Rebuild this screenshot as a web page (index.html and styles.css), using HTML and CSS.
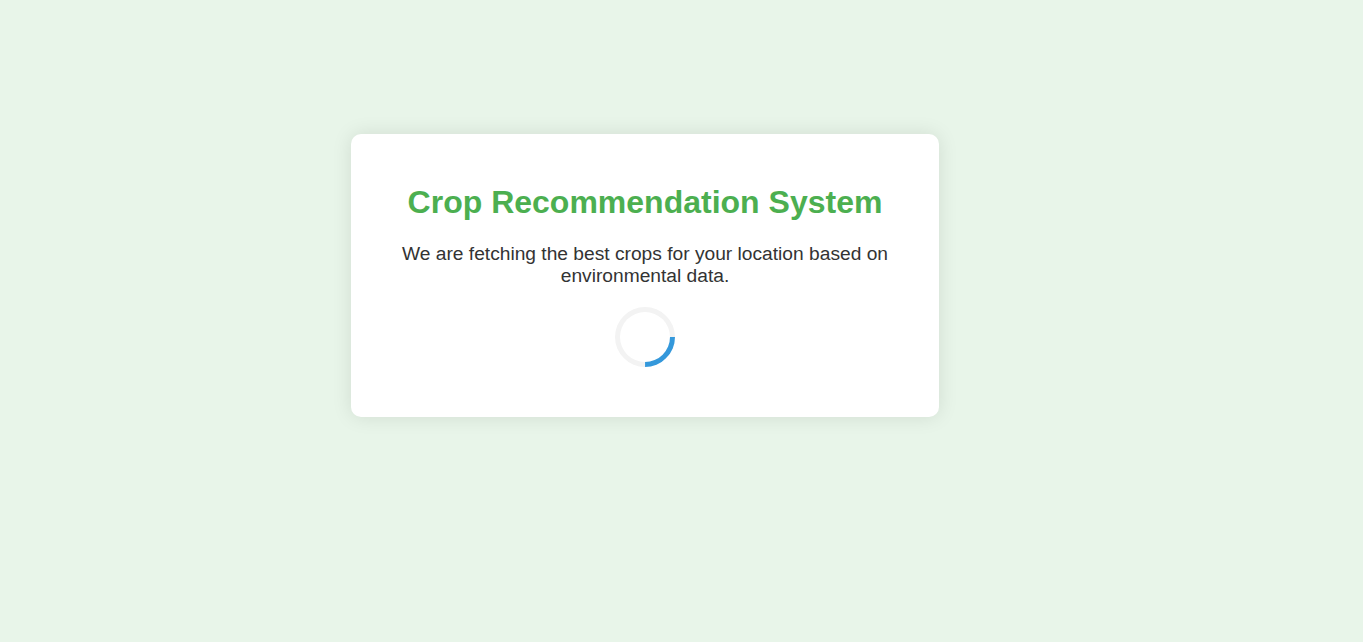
FILE: index.html
```html
<!DOCTYPE html>
<html lang="en">
<head>
<meta charset="UTF-8">
<title>Crop Recommendation System</title>
<link rel="stylesheet" href="styles.css">
</head>
<body>
<main class="page">
  <section class="card">
    <h1 class="title">Crop Recommendation System</h1>
    <p class="message">We are fetching the best crops for your location based on environmental data.</p>
    <div class="spinner"></div>
  </section>
</main>
</body>
</html>
```

FILE: styles.css
```css
html, body {
  margin: 0;
  padding: 0;
  height: 100%;
}
body {
  background: #e8f5e9;
  font-family: "Liberation Sans", Arial, sans-serif;
  color: #333;
}
.page {
  display: flex;
  align-items: flex-start;
  padding: 134px 0 0 351px;
}
.card {
  width: 528px;
  padding: 30px;
  background: #fff;
  border-radius: 10px;
  box-shadow: 0 0 20px rgba(0, 0, 0, 0.1);
  text-align: center;
}
.title {
  margin: 20.4px 0 21.44px;
  font-size: 32px;
  font-weight: bold;
  color: #4caf50;
}
.message {
  margin: 19.2px 0 0;
  font-size: 19.2px;
  color: #333;
}
.spinner {
  width: 50px;
  height: 50px;
  margin: 20px auto;
  border: 5px solid #f3f3f3;
  border-top-color: #3498db;
  border-radius: 50%;
  transform: rotate(135deg);
}
```
